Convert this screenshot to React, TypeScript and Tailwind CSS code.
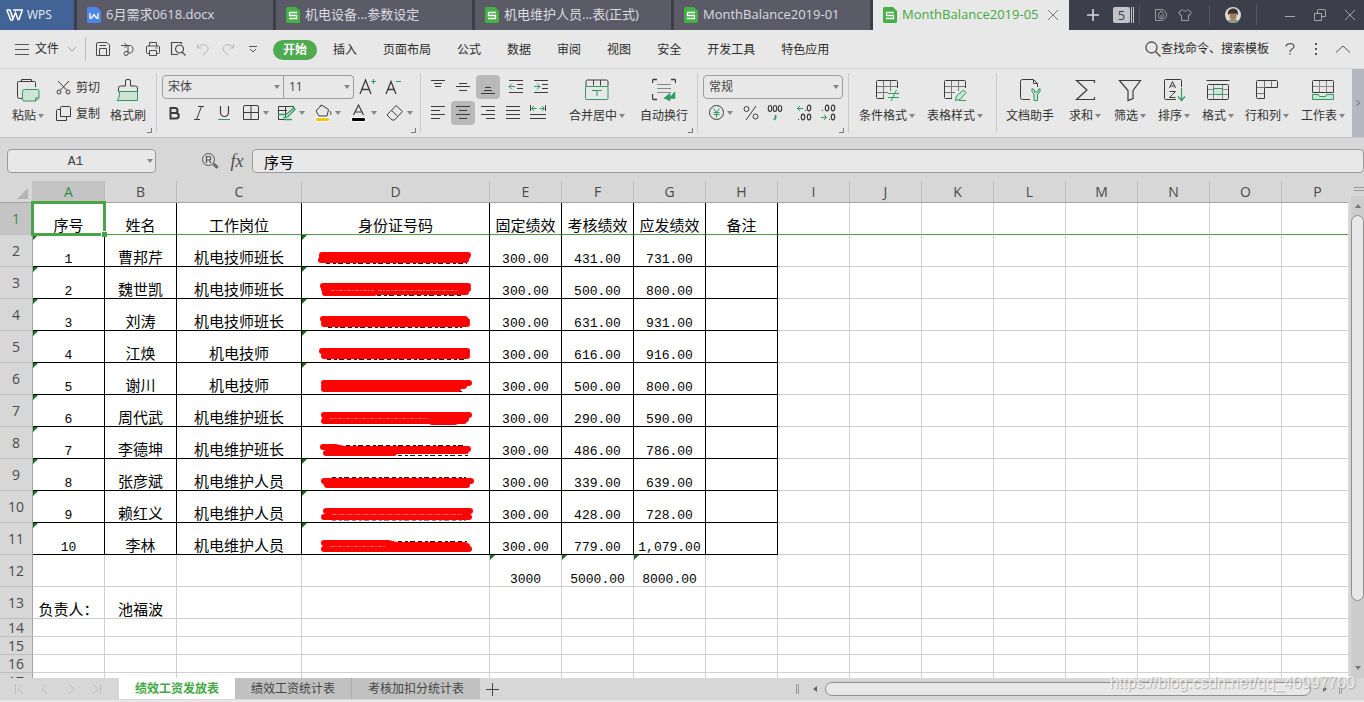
import { useState, type ReactNode } from 'react';

const GREEN = '#2f9a62';
const PALE = '#cfe3d6';

type IconProps = { children: ReactNode; size?: number; color?: string };

function Icon({ children, size = 24, color = '#3c3c3c' }: IconProps) {
  return (
    <svg width={size} height={size} viewBox={`0 0 ${size} ${size}`} fill="none" stroke={color} className="shrink-0" aria-hidden="true">
      {children}
    </svg>
  );
}

function Caret() {
  return (
    <svg width="6" height="4" viewBox="0 0 6 4" fill="#858585" className="shrink-0" aria-hidden="true">
      <path d="M0 0h6L3 4z" />
    </svg>
  );
}

function Corner() {
  return (
    <svg width="5" height="5" viewBox="0 0 5 5" fill="none" stroke="#777" className="absolute right-1 bottom-1" aria-hidden="true">
      <path d="M4.5 0v4.5H0" />
    </svg>
  );
}

function Divider() {
  return <div className="my-1 w-px shrink-0 bg-[#cbcbcb]" />;
}

/* ---------- title bar ---------- */

function FileIcon({ kind }: { kind: 'doc' | 'sheet' }) {
  return (
    <svg width="14" height="16" viewBox="0 0 14 16" className="shrink-0" aria-hidden="true">
      <path d="M1.5 0H10l4 4v10.5a1.5 1.5 0 0 1-1.5 1.5h-11A1.5 1.5 0 0 1 0 14.500v-13A1.500 1.500 0 0 1 1.500 0z" fill={kind === 'doc' ? '#4d85e8' : '#45b045'} />
      {kind === 'doc' ? (
        <path d="M3 6v5h1.500L7 7.500 9.500 11H11V6" fill="none" stroke="#fff" strokeWidth="1.300" />
      ) : (
        <path d="M11 5.500H3.500v3h7v3H3" fill="none" stroke="#fff" strokeWidth="1.300" />
      )}
    </svg>
  );
}

const files: { name: string; kind: 'doc' | 'sheet' }[] = [
  { name: '6月需求0618.docx', kind: 'doc' },
  { name: '机电设备...参数设定', kind: 'sheet' },
  { name: '机电维护人员...表(正式)', kind: 'sheet' },
  { name: 'MonthBalance2019-01', kind: 'sheet' },
];

function TitleBar() {
  return (
    <header className="flex h-[30px] shrink-0 gap-[3px] bg-[#3c3f4b] text-[13px] text-[#dcdce0]">
      <button className="flex w-[74px] shrink-0 items-center gap-1 bg-[#426396] pl-[6px] text-[12px] text-[#e8eef8]">
        <svg width="17" height="12" viewBox="0 0 17 12" fill="none" stroke="#fff" strokeWidth="1.500" aria-hidden="true">
          <path d="M.5 1H4l3 8.500L8.500 6M.8 1l4 10h1.700L9.500 3.500l2.500 7h1L16.300 1H7" />
        </svg>
        WPS
      </button>
      {files.map((f) => (
        <button key={f.name} className="flex w-[196px] shrink items-center gap-[5px] overflow-hidden bg-[#5a5b66] pl-[10px] whitespace-nowrap">
          <FileIcon kind={f.kind} />
          {f.name}
        </button>
      ))}
      <div className="flex w-[196px] shrink items-center gap-[5px] bg-[#e8e8e8] pl-[10px] whitespace-nowrap text-[#43a843]">
        <FileIcon kind="sheet" />
        <span className="grow">MonthBalance2019-05</span>
        <button aria-label="关闭标签" className="mr-[10px]">
          <Icon size={12} color="#777"><path d="M1 1l10 10M11 1L1 11" /></Icon>
        </button>
      </div>
      <div className="flex grow items-center">
        <button aria-label="新建" className="flex w-[41px] shrink-0 justify-center">
          <Icon size={14} color="#d8d8dc"><path d="M7 1v12M1 7h12" strokeWidth="1.600" /></Icon>
        </button>
        <button className="flex h-4 shrink-0 items-center gap-px">
          <span className="h-4 w-[17px] rounded-xs bg-[#c3c4c9] text-center text-[13px] leading-4 text-[#3c3f4b]">5</span>
          <span className="h-4 w-px bg-[#c3c4c9]" />
          <span className="h-4 w-px bg-[#c3c4c9]" />
        </button>
        <span className="ml-[5px] h-5 w-px bg-[#555863]" />
        <button aria-label="稻壳" className="ml-[9px] flex w-6 justify-center">
          <Icon size={14} color="#9b9da6">
            <path d="M1.500 1.500H7a5.500 5.500 0 0 1 0 11H1.500z" />
            <path d="M7 3c1.500 1.500 2.500 3 2.500 4.800A2.400 2.400 0 0 1 7 10.500a2.400 2.400 0 0 1-2.500-2.700C4.500 6 5.500 4.500 7 3zM7 10V7" />
          </Icon>
        </button>
        <button aria-label="皮肤" className="flex w-6 justify-center">
          <Icon size={14} color="#9b9da6"><path d="M4.500 1.500L.8 4l1 3h1.700v5.500h7V7h1.700l1-3-3.700-2.500C8.500 3.500 5.500 3.500 4.500 1.500z" /></Icon>
        </button>
        <span className="ml-3 h-5 w-px bg-[#555863]" />
        <button aria-label="用户" className="ml-[15px] shrink-0">
          <svg width="16" height="16" viewBox="0 0 16 16" aria-hidden="true">
            <circle cx="8" cy="8" r="8" fill="#d9dcd8" />
            <path d="M2.500 14a8 8 0 0 0 11 0C12 11.500 4 11.500 2.500 14z" fill="#8b9a8b" />
            <ellipse cx="8" cy="8.500" rx="3.500" ry="4.500" fill="#a67c60" />
            <path d="M3 8.500C2 3.500 5 1.500 8.200 1.500c3.500 0 5.500 2.500 4.600 7-1-2.300-1.500-2-4.800-2S4 6.500 3 8.500z" fill="#3a332f" />
          </svg>
        </button>
        <span className="ml-[15px] h-5 w-px bg-[#555863]" />
        <div className="ml-auto flex">
          <button aria-label="最小化" className="flex w-[30px] justify-center"><Icon size={12} color="#a3a5ad"><path d="M1 7.500h10" /></Icon></button>
          <button aria-label="还原" className="flex w-[30px] justify-center"><Icon size={12} color="#a3a5ad"><path d="M.5 4.500h7v7h-7zM3.500 4V1.500a1 1 0 0 1 1-1h6a1 1 0 0 1 1 1v6H8" /></Icon></button>
          <button aria-label="关闭" className="flex w-[29px] justify-center"><Icon size={12} color="#a3a5ad"><path d="M1 1l10 10M11 1L1 11" /></Icon></button>
        </div>
      </div>
    </header>
  );
}

/* ---------- menu row ---------- */

const menus = ['开始', '插入', '页面布局', '公式', '数据', '审阅', '视图', '安全', '开发工具', '特色应用'];

const quickTools: { label: string; color?: string; icon: ReactNode }[] = [
  { label: '保存', icon: <path d="M1.500 14.500V3A1.500 1.500 0 0 1 3 1.500h9l2.500 2.500v10.500zM4.500 4.500h6.500M4.500 14V7.500h7V14" /> },
  { label: '输出', icon: <path d="M1 4.500h9.500a4 4 0 0 1 0 7.500H8M4.500 2l2.500 2.500L4.500 7M8 4.500v8a2 2 0 1 1-2-2h2" /> },
  { label: '打印', icon: <path d="M4.500 5V1.500h7V5M4 12.500H2.500a1 1 0 0 1-1-1V6a1 1 0 0 1 1-1h11a1 1 0 0 1 1 1v5.500a1 1 0 0 1-1 1H12M4.500 9.500h7v5h-7zM10.500 7h2" /> },
  { label: '打印预览', icon: <path d="M8 13.500H1.500v-12h10V3M9.500 4a4 4 0 1 0 .1 0zM12 11l3.500 3.500" strokeWidth="1.200" /> },
  { label: '撤销', color: '#b5b5b5', icon: <path d="M2.500 3v4h4M2.800 6.700C5 3.500 9 2.800 11.500 4.800s2.500 5-4 9.200" /> },
  { label: '恢复', color: '#b5b5b5', icon: <path d="M13.500 3v4h-4M13.200 6.700C11 3.500 7 2.800 4.500 4.800s-2.500 5 4 9.200" /> },
];

function MenuRow() {
  const [active, setActive] = useState('开始');
  return (
    <div className="flex h-[39px] shrink-0 items-center border-b border-[#d6d6d6] text-[12px] text-[#2c2c2c]">
      <button className="flex items-center pl-[15px]">
        <Icon size={14} color="#555"><path d="M0 2.500h14M0 7.500h14M0 12.500h14" /></Icon>
        <span className="ml-[6px]">文件</span>
        <span className="ml-2"><Icon size={10} color="#999"><path d="M1 3l4 4 4-4" /></Icon></span>
      </button>
      <span className="ml-2 h-6 w-px bg-[#bdbdbd]" />
      <div className="ml-1 flex">
        {quickTools.map((t) => (
          <button key={t.label} aria-label={t.label} className="flex w-[25px] justify-center">
            <Icon size={16} color={t.color || '#4a4a4a'}>{t.icon}</Icon>
          </button>
        ))}
        <button aria-label="自定义" className="flex w-[25px] items-center justify-center">
          <Icon size={8} color="#555"><path d="M0 1.500h8M1 4l3 3 3-3" /></Icon>
        </button>
      </div>
      <nav className="ml-[5px] flex items-center pt-px">
        {menus.map((m) => (
          <button
            key={m}
            onClick={() => setActive(m)}
            className={
              m === active
                ? 'mx-[3px] h-5 rounded-full bg-[#4eab50] px-[10px] font-bold whitespace-nowrap text-white'
                : 'px-[13px] whitespace-nowrap'
            }
          >
            {m}
          </button>
        ))}
      </nav>
      <button className="ml-auto flex items-center whitespace-nowrap">
        <Icon size={16} color="#555"><circle cx="6.500" cy="6.500" r="5.500" strokeWidth="1.300" /><path d="M10.500 10.500l5 5" strokeWidth="1.500" /></Icon>
        查找命令、搜索模板
      </button>
      <button aria-label="帮助" className="ml-[15px]">
        <Icon size={12} color="#555"><path d="M2 3.500C2 1.500 4 .7 6 .7s4 1 4 3-4 2.300-4 5.300M6 10.200v1.500" strokeWidth="1.300" /></Icon>
      </button>
      <button aria-label="更多" className="ml-[18px]">
        <svg width="4" height="12" viewBox="0 0 4 12" fill="#555" aria-hidden="true"><path d="M1 0h2v2H1zM1 5h2v2H1zM1 10h2v2H1z" /></svg>
      </button>
      <button aria-label="收起" className="mr-[14px] ml-[18px]">
        <Icon size={14} color="#555"><path d="M0 10.500l7-6.500 7 6.500" /></Icon>
      </button>
    </div>
  );
}

/* ---------- ribbon ---------- */

function BigButton({ label, width, caret = true, children }: { label: string; width: string; caret?: boolean; children: ReactNode }) {
  return (
    <button className={`flex shrink-0 flex-col items-center gap-[6px] pt-[9px] ${width}`}>
      <Icon>{children}</Icon>
      <span className="flex items-center gap-[2px] leading-4 whitespace-nowrap">
        {label}
        {caret && <Caret />}
      </span>
    </button>
  );
}

function SmallButton({ label, active = false, caret = false, children }: { label: string; active?: boolean; caret?: boolean; children: ReactNode }) {
  return (
    <button aria-label={label} className={`flex h-6 shrink-0 items-center ${active ? 'rounded-sm bg-[#b9b9b9]' : ''}`}>
      <Icon>{children}</Icon>
      {caret && <Caret />}
    </button>
  );
}

function ComboBox({ label, value, className }: { label: string; value: string; className: string }) {
  return (
    <div className={`relative flex h-6 items-center border-[#9d9d9d] bg-[#e8e8e8] ${className}`}>
      <select aria-label={label} className="h-full w-full appearance-none bg-transparent pl-[5px] text-[12px] text-[#444] outline-none" defaultValue={value}>
        <option>{value}</option>
      </select>
      <span className="pointer-events-none absolute right-[3px] flex"><Caret /></span>
    </div>
  );
}

function Ribbon() {
  return (
    <div className="flex h-[68px] shrink-0 text-[12px] text-[#333]">
      <div className="relative flex w-[156px] shrink-0">
        <BigButton label="粘贴" width="w-[56px]">
          <path d="M6 20.500H3.500a2 2 0 0 1-2-2v-14a1 1 0 0 1 1-1h16a1 1 0 0 1 1 1V9M5.500 3.500v-2h10v2z" />
          <path d="M8.500 11.500h13a1.500 1.500 0 0 1 1.500 1.500v7l-3 3H8a1.500 1.500 0 0 1-1.500-1.500v-8a2 2 0 0 1 2-2zM19.500 23v-3H23" stroke={GREEN} fill={PALE} />
        </BigButton>
        <div className="flex w-[46px] flex-col gap-[2px] pt-[6px]">
          <button className="flex h-6 items-center gap-[5px] pt-px whitespace-nowrap">
            <Icon size={15}><path d="M2 1l9 9.500M13 1L4 10.500" /><circle cx="3" cy="12" r="2" /><circle cx="12" cy="12" r="2" /></Icon>
            剪切
          </button>
          <button className="flex h-6 items-center gap-[5px] pt-px whitespace-nowrap">
            <Icon size={15}><path d="M5.500 .5h8a1 1 0 0 1 1 1v9h-10v-9a1 1 0 0 1 1-1zM4 3.500H1.500a1 1 0 0 0-1 1v10h10V11" /></Icon>
            复制
          </button>
        </div>
        <BigButton label="格式刷" width="w-[52px]" caret={false}>
          <path d="M2.500 13.500h19v9h-19z" fill={PALE} stroke="none" />
          <path d="M2.500 13.500V10a2 2 0 0 1 2-2h5V3a1.500 1.500 0 0 1 1.500-1.500h2A1.500 1.500 0 0 1 14.500 3v5h5a2 2 0 0 1 2 2v3.500" />
          <path d="M2 13.500h20M3.500 14c0 4-.5 6.500-2.500 8.500h20.500V14" stroke={GREEN} />
        </BigButton>
        <Corner />
      </div>
      <Divider />

      <div className="relative flex w-[263px] shrink-0 flex-col gap-[2px] pt-[6px] pl-[5px]">
        <div className="flex items-center">
          <ComboBox label="字体" value="宋体" className="w-[122px] rounded-l-sm border" />
          <ComboBox label="字号" value="11" className="w-[70px] rounded-r-sm border border-l-0" />
          <span className="ml-[2px] flex gap-[2px]">
            <SmallButton label="增大字号">
              <path d="M4 19l5.500-14L15 19M6 14.500h7" strokeWidth="1.300" />
              <path d="M15 6.500h5M17.500 4v5" stroke={GREEN} />
            </SmallButton>
            <SmallButton label="减小字号">
              <path d="M4 19l5-12.500L14 19M6 14.500h6" strokeWidth="1.300" />
              <path d="M14 6.500h5" stroke={GREEN} />
            </SmallButton>
          </span>
        </div>
        <div className="flex items-center gap-px">
          <SmallButton label="加粗"><path d="M8.500 7H13a2.500 2.500 0 0 1 0 5H8.500zM8.500 12H14a2.700 2.700 0 0 1 0 5.500H8.500z" strokeWidth="2" /></SmallButton>
          <SmallButton label="倾斜"><path d="M11 5.500h6M7 18.500h6M14.500 5.500l-5 13" /></SmallButton>
          <SmallButton label="下划线"><path d="M8.500 5v6.500a4 4 0 0 0 8 0V5" strokeWidth="1.200" /><path d="M6 18.500h12" stroke={GREEN} /></SmallButton>
          <span className="ml-[2px] flex gap-[6px]">
            <SmallButton label="边框" caret><path d="M6 4.500h12a1.500 1.500 0 0 1 1.500 1.500v12.500H4.500V6A1.500 1.500 0 0 1 6 4.500zM12 5v14M5 11.500h14" /></SmallButton>
            <SmallButton label="绘图边框" caret>
              <path d="M18.500 8V5.500h-15v13h10M10.500 5.500v11M4 9.500h8" />
              <path d="M3 13.500h8l8-6.500 1 1.500-7 7-5 1.500M9 18.500h8" stroke={GREEN} strokeWidth="1.300" />
            </SmallButton>
            <SmallButton label="填充颜色" caret>
              <path d="M9 5.500l1.500-1.500 7 4.500-1.500 6.500H8L5 10l5.500-6" />
              <path d="M19 10c1 1.500 1.500 3 .5 4" />
              <rect x="4" y="16" width="15" height="5" rx="2" fill="#fff" stroke="none" />
              <rect x="5" y="17" width="13" height="3" rx="1" fill="#f6c21a" stroke="none" />
            </SmallButton>
            <SmallButton label="字体颜色" caret>
              <path d="M6.500 14L11.500 4l5 10M8 11h7" strokeWidth="1.200" />
              <rect x="4" y="16" width="15" height="5" rx="2" fill="#fff" stroke="none" />
              <rect x="5" y="17" width="13" height="3" rx="1" fill="#000" stroke="none" />
            </SmallButton>
            <SmallButton label="清除" caret><path d="M13 4.500l6.500 6-8 8.500H9l-5-5zM8.500 9.500l6 5.500" /></SmallButton>
          </span>
        </div>
        <Corner />
      </div>
      <Divider />

      <div className="relative flex w-[276px] shrink-0 pl-[5px]">
        <div className="flex w-[132px] flex-col gap-[2px] pt-[6px]">
          <div className="flex gap-px">
            <SmallButton label="顶端对齐"><path d="M5 5.500h14M8 8.500h8M9 11.500h6" /></SmallButton>
            <SmallButton label="垂直居中"><path d="M8 8.500h8M5 11.500h14M8 15.500h8" /></SmallButton>
            <SmallButton label="底端对齐" active><path d="M9 12.500h6M8 15.500h8M5 18.500h14" /></SmallButton>
            <span className="w-[2px]" />
            <SmallButton label="减少缩进"><path d="M5 5.500h14M13 9.500h6M13 13.500h6M5 17.500h14" /><path d="M11 11.500H5M8 8.500l-3 3 3 3" stroke={GREEN} /></SmallButton>
            <SmallButton label="增加缩进"><path d="M5 5.500h14M13 9.500h6M13 13.500h6M5 17.500h14" /><path d="M5 11.500h6M8 8.500l3 3-3 3" stroke={GREEN} /></SmallButton>
          </div>
          <div className="flex gap-px">
            <SmallButton label="左对齐"><path d="M5 5.500h14M5 9.500h9M5 13.500h14M5 17.500h9" /></SmallButton>
            <SmallButton label="水平居中" active><path d="M5 5.500h14M8 9.500h8M5 13.500h14M8 17.500h8" /></SmallButton>
            <SmallButton label="右对齐"><path d="M5 5.500h14M10 9.500h9M5 13.500h14M10 17.500h9" /></SmallButton>
            <SmallButton label="两端对齐"><path d="M5 5.500h14M5 9.500h14M5 13.500h14M5 17.500h14" /></SmallButton>
            <SmallButton label="分散对齐"><path d="M4.500 4v6M19.500 4v6M4 13.500h16M4 17.500h16" /><path d="M6 7.500h4.500M8 5L5.500 7.500 8 10M18 7.500h-4.500M16 5l2.500 2.500L16 10" stroke={GREEN} /></SmallButton>
          </div>
        </div>
        <BigButton label="合并居中" width="w-[78px]">
          <path d="M1 8V3.500A1.500 1.500 0 0 1 2.500 2h19A1.500 1.500 0 0 1 23 3.500V8M8.500 2v5.500M15.500 2v5.500" />
          <path d="M.5 8.500h22.500v12a1 1 0 0 1-1 1H1.500a1 1 0 0 1-1-1zM7 12.500h10M12 13v5" stroke={GREEN} />
        </BigButton>
        <BigButton label="自动换行" width="w-[56px]" caret={false}>
          <path d="M.5 5V2.500a1 1 0 0 1 1-1H5M19 1.500h3.500a1 1 0 0 1 1 1V5M.5 16v4.500a1 1 0 0 0 1 1H5" strokeWidth="1.300" />
          <path d="M5 6.500h14M5 10.500h14M5 14.500h14" stroke="#8a8a8a" />
          <path d="M22.500 14v6H17M17.500 16.500V22l-4.500-2z" stroke={GREEN} strokeWidth="1.600" fill={GREEN} />
        </BigButton>
        <Corner />
      </div>
      <Divider />

      <div className="relative flex w-[150px] shrink-0 flex-col gap-[2px] px-[5px] pt-[6px]">
        <ComboBox label="数字格式" value="常规" className="w-full rounded-sm border" />
        <div className="flex">
          <SmallButton label="货币" caret>
            <circle cx="13.500" cy="11.500" r="7" />
            <path d="M10.500 7.500l3 4 3-4M10.500 11.500h6M10.500 13.500h6M13.500 11.500v5" stroke={GREEN} />
          </SmallButton>
          <span className="ml-[6px] flex">
            <SmallButton label="百分比"><path d="M17 5L7 19" /><circle cx="7.500" cy="8" r="2.500" /><circle cx="16.500" cy="15.500" r="2.500" /></SmallButton>
            <SmallButton label="千位分隔">
              <g strokeWidth="1.200"><ellipse cx="7" cy="7.500" rx="1.700" ry="3" /><ellipse cx="12" cy="7.500" rx="1.700" ry="3" /><ellipse cx="17" cy="7.500" rx="1.700" ry="3" /></g>
              <path d="M12.500 14v3l-1.500 2" stroke={GREEN} strokeWidth="1.800" />
            </SmallButton>
          </span>
          <span className="ml-[5px] flex">
            <SmallButton label="增加小数">
              <path d="M11 7.500H5M8 5L5.500 7.500 8 10" stroke={GREEN} />
              <g strokeWidth="1.200"><ellipse cx="17" cy="7" rx="1.700" ry="2.800" /><ellipse cx="11" cy="16" rx="1.700" ry="2.800" /><ellipse cx="17" cy="16" rx="1.700" ry="2.800" /><path d="M13 9.500h1M6 18.500h1" /></g>
            </SmallButton>
            <SmallButton label="减少小数">
              <path d="M5 16.500h6M8 14l2.500 2.500L8 19" stroke={GREEN} />
              <g strokeWidth="1.200"><ellipse cx="11" cy="7" rx="1.700" ry="2.800" /><ellipse cx="17" cy="7" rx="1.700" ry="2.800" /><ellipse cx="17" cy="16" rx="1.700" ry="2.800" /><path d="M6 9.500h1M13 18.500h1" /></g>
            </SmallButton>
          </span>
        </div>
        <Corner />
      </div>
      <Divider />

      <div className="flex w-[147px] shrink-0 pl-[4px]">
        <BigButton label="条件格式" width="w-[68px]">
          <path d="M9 20.500H2.500a1 1 0 0 1-1-1V3.500a1 1 0 0 1 1-1h19a1 1 0 0 1 1 1V10" />
          <path d="M2 8.500h20M8.500 3v17M15.500 3v10M2 14.500h11" stroke="#777" />
          <path d="M13 15.500h11M13 19.500h11M21.500 12l-5.500 11" stroke={GREEN} />
        </BigButton>
        <BigButton label="表格样式" width="w-[68px]">
          <path d="M9 20.500H2.500a1 1 0 0 1-1-1V3.500a1 1 0 0 1 1-1h19a1 1 0 0 1 1 1V10" />
          <path d="M2 8.500h20M8.500 3v17M15.500 3v10M2 14.500h10" stroke="#777" />
          <path d="M12.500 22.500l1-4.500 7-6 2.500 2.500-6 7zM16 22.500h7" stroke={GREEN} fill={PALE} />
        </BigButton>
      </div>
      <Divider />

      <div className="flex min-w-0 grow pl-px">
        <BigButton label="文档助手" width="w-16" caret={false}>
          <path d="M12 21.500H4.500a2 2 0 0 1-2-2v-16a2 2 0 0 1 2-2h11l4 4V9M15.500 2v3.500h4" />
          <path d="M14 10.500v3.500l2 2v6.500h3.500V16l2.500-2v-3.500l-2 1.500v2h-3.500v-2z" stroke={GREEN} fill={PALE} />
        </BigButton>
        <BigButton label="求和" width="w-[46px]">
          <path d="M21.500 5V2.500H3.500L14 12 3.500 21.500h18V19" strokeWidth="1.200" />
        </BigButton>
        <BigButton label="筛选" width="w-[44px]">
          <path d="M1.500 2.500h21L15 12.500v8L10 22.500v-10z" strokeWidth="1.200" />
        </BigButton>
        <BigButton label="排序" width="w-[44px]">
          <path d="M14 21.500H3.500a1 1 0 0 1-1-1v-18a1 1 0 0 1 1-1h15a1 1 0 0 1 1 1V9" />
          <path d="M7.500 10L10.500 3.500l3 6.500M8.500 8h4M7.500 13.500h6l-6 6h6" />
          <path d="M19.500 10v12M16 18.500l3.500 4 3.500-4" stroke={GREEN} strokeWidth="1.200" />
        </BigButton>
        <BigButton label="格式" width="w-[44px]">
          <path d="M.5 2.500h23M2.500 6.500h19a1 1 0 0 1 1 1v13a1 1 0 0 1-1 1h-19a1 1 0 0 1-1-1v-13a1 1 0 0 1 1-1z" />
          <path d="M2 11.500h20M2 16.500h20M7.500 7v14M16.500 7v14" stroke="#888" />
          <path d="M7.500 10.500h9v6h-9z" stroke={GREEN} fill={PALE} />
        </BigButton>
        <BigButton label="行和列" width="w-[54px]">
          <path d="M2.500 2.500h19a1 1 0 0 1 1 1v6H9.500v11h-7a1 1 0 0 1-1-1v-16a1 1 0 0 1 1-1z" />
          <path d="M2 9.500h7.500M2 15.500h7M9.500 3v7M16.500 3v6" stroke="#777" />
        </BigButton>
        <BigButton label="工作表" width="w-[58px]">
          <path d="M1.500 14.500v-11a1 1 0 0 1 1-1h19a1 1 0 0 1 1 1v11z" />
          <path d="M2 8.500h20M8.500 3v11M15.500 3v11" stroke="#888" />
          <path d="M1.500 16.500h6l1 2h6l1-2h7v5h-21z" stroke={GREEN} fill={PALE} />
        </BigButton>
      </div>
      <button aria-label="更多工具" className="flex w-3 shrink-0 items-center justify-center bg-[#b5b8c1]">
        <Icon size={6} color="#666"><path d="M1.500 0L4.500 3 1.500 6" /></Icon>
      </button>
    </div>
  );
}

/* ---------- formula bar ---------- */

function FormulaBar() {
  return (
    <div className="flex h-[44px] shrink-0 items-start border-t border-[#c4c4c4] bg-[#d7d7d7] pt-[11px] pl-[7px]">
      <div className="relative flex h-6 w-[149px] items-center">
        <input aria-label="名称框" defaultValue="A1" className="h-6 w-full rounded-sm border border-[#9a9a9a] bg-[#e8e8e8] pr-3 text-center font-['Liberation_Mono','Noto_Sans_CJK_SC',monospace] text-[13px] text-[#444] outline-none" />
        <span className="pointer-events-none absolute right-[3px] flex"><Caret /></span>
      </div>
      <button aria-label="浏览" className="ml-[45px] flex h-6 items-center">
        <Icon size={18} color="#555"><circle cx="7.500" cy="7.500" r="6" /><path d="M5.500 11V4.500H8a1.700 1.700 0 0 1 0 3.500H5.500M8 8l2 3M12 12.500l3.500 3.500 1.200-1.200-3.700-3.500" strokeWidth="1.200" /></Icon>
      </button>
      <button aria-label="插入函数" className="ml-[9px] h-6 w-[18px] font-['Liberation_Serif',serif] text-[18px] leading-5 text-[#4f4f4f] italic">fx</button>
      <input aria-label="编辑栏" defaultValue="序号" className="ml-[6px] h-6 min-w-0 grow rounded-sm border border-[#9a9a9a] bg-[#e8e8e8] pl-[11px] font-['Noto_Sans_CJK_SC',sans-serif] text-[15px] leading-5 text-black outline-none" />
    </div>
  );
}

/* ---------- sheet ---------- */

const columns = [
  { id: 'A', width: 'w-[72px]' },
  { id: 'B', width: 'w-[72px]' },
  { id: 'C', width: 'w-[125px]' },
  { id: 'D', width: 'w-[188px]' },
  { id: 'E', width: 'w-[72px]' },
  { id: 'F', width: 'w-[72px]' },
  { id: 'G', width: 'w-[72px]' },
  { id: 'H', width: 'w-[72px]' },
  { id: 'I', width: 'w-[72px]' },
  { id: 'J', width: 'w-[72px]' },
  { id: 'K', width: 'w-[72px]' },
  { id: 'L', width: 'w-[72px]' },
  { id: 'M', width: 'w-[72px]' },
  { id: 'N', width: 'w-[72px]' },
  { id: 'O', width: 'w-[72px]' },
  { id: 'P', width: 'w-[72px]' },
];

const rows: string[][] = [
  ['序号', '姓名', '工作岗位', '身份证号码', '固定绩效', '考核绩效', '应发绩效', '备注'],
  ['1', '曹邦芹', '机电技师班长', '', '300.00', '431.00', '731.00'],
  ['2', '魏世凯', '机电技师班长', '', '300.00', '500.00', '800.00'],
  ['3', '刘涛', '机电技师班长', '', '300.00', '631.00', '931.00'],
  ['4', '江焕', '机电技师', '', '300.00', '616.00', '916.00'],
  ['5', '谢川', '机电技师', '', '300.00', '500.00', '800.00'],
  ['6', '周代武', '机电维护班长', '', '300.00', '290.00', '590.00'],
  ['7', '李德坤', '机电维护班长', '', '300.00', '486.00', '786.00'],
  ['8', '张彦斌', '机电维护人员', '', '300.00', '339.00', '639.00'],
  ['9', '赖红义', '机电维护人员', '', '300.00', '428.00', '728.00'],
  ['10', '李林', '机电维护人员', '', '300.00', '779.00', '1,079.00'],
  ['', '', '', '', '3000', '5000.00', '8000.00'],
  ['负责人：', '池福波'],
  [],
  [],
  [],
  [],
];

// marker strokes over the id numbers: red brush, black remains, light gaps
const marks: { red: string; black?: string; light?: string }[] = [
  { red: 'M20 20H166M19 25H164M20 22H165', black: 'M24 28.500H165' },
  { red: 'M21 19H166M22 22H166M23 25H164M23 26H72', light: 'M29 23.500H72M76 23.500H155', black: 'M75 28.500H162' },
  { red: 'M21 20H163M22 22H165M22 25H165', black: 'M26 28.500H160' },
  { red: 'M20 20H165M22 22H165M22 25H165', black: 'M25 28.500H164' },
  { red: 'M22 20H167M22 23H162M22 26H156', black: 'M136 28.500H163' },
  { red: 'M22 20H167M23 24H164M22 26H162M130 27H153', light: 'M28 23.500H126' },
  { red: 'M21 20H33L42 22H166M30 24H164M24 26H92', black: 'M44 18.500H164M96 28.500H166' },
  { red: 'M22 22H169M24 24H164M25 26H165', black: 'M30 18.500H164' },
  { red: 'M24 20H168M26 23H164M22 26H167', light: 'M30 23.500H160', black: 'M30 29H164' },
  { red: 'M22 20H86L94 22H163M24 23H165M22 26H167', black: 'M96 18.500H165', light: 'M28 23.500H84' },
];

function Marker({ index }: { index: number }) {
  const m = marks[index];
  return (
    <svg width="187" height="31" viewBox="0 0 187 31" fill="none" className="block" role="img" aria-label="已遮盖">
      {m.black && <path d={m.black} stroke="#3a1010" strokeDasharray="4 3 3 2 5 3" />}
      <path d={m.red} stroke="#fb0404" strokeWidth="6" strokeLinecap="round" strokeLinejoin="round" />
      {m.light && <path d={m.light} stroke="#f66" strokeDasharray="4 1 2 1" />}
    </svg>
  );
}

function hasErrorFlag(row: number, col: number) {
  if (row >= 1 && row <= 10 && col === 0) return true;
  if (row >= 1 && row <= 10 && col === 3) return row !== 6 && row !== 7;
  return row === 11 && col >= 4 && col <= 6;
}

function cellBorder(row: number, col: number) {
  const boxed = col <= 7 && row <= 10;
  const right = boxed ? 'border-r-black' : 'border-r-[#d0d0d0]';
  if (row === 0) return `${right} border-b-[#4f9a48]`;
  return `${right} ${boxed ? 'border-b-black' : 'border-b-[#d0d0d0]'}`;
}

function Sheet() {
  return (
    <div className="min-w-0 grow overflow-hidden bg-white">
      <table className="w-px table-fixed border-separate border-spacing-0">
        <colgroup>
          <col className="w-[33px]" />
          {columns.map((c) => <col key={c.id} className={c.width} />)}
        </colgroup>
        <thead>
          <tr className="h-[22px] bg-[#d7d7d7] text-[14px] text-[#4a4a4a]">
            <td className="h-[22px] border-r border-b border-r-[#c4c4c4] border-b-[#a3a3a3] p-0">
              <svg width="11" height="11" viewBox="0 0 11 11" className="mt-1 mr-1 ml-auto" aria-hidden="true"><path d="M11 0v11H0z" fill="#b5b5b5" /></svg>
            </td>
            {columns.map((c) => (
              <th
                key={c.id}
                scope="col"
                className={`h-[22px] border-r border-b border-r-[#bcbcbc] border-b-[#a3a3a3] p-0 leading-5 font-normal ${c.id === 'A' ? 'bg-[#c4c4c4] text-[#3b8a4c]' : ''}`}
              >
                {c.id}
              </th>
            ))}
          </tr>
        </thead>
        <tbody>
          {rows.map((cells, r) => (
            <tr key={r} className={r < 13 ? 'h-8' : 'h-[18px]'}>
              <th
                scope="row"
                className={`border-r border-b border-r-[#a3a3a3] border-b-[#bcbcbc] p-0 align-middle text-[14px] leading-4 font-normal ${r === 0 ? 'bg-[#c4c4c4] text-[#3b8a4c]' : 'bg-[#d7d7d7] text-[#4a4a4a]'}`}
              >
                {r + 1}
              </th>
              {columns.map((c, i) => {
                const text = cells[i] || '';
                const numeric = /^[\d.,]+$/.test(text);
                return (
                  <td
                    key={c.id}
                    className={`relative border-r border-b p-0 text-center align-bottom font-['Liberation_Mono','Noto_Sans_CJK_SC',monospace] leading-3 whitespace-nowrap text-black ${numeric ? 'text-[13px]' : 'text-[15px]'} ${cellBorder(r, i)}`}
                  >
                    {hasErrorFlag(r, i) && (
                      <svg width="5" height="5" viewBox="0 0 5 5" className="absolute top-0 left-0" aria-hidden="true"><path d="M0 0h5L0 5z" fill="#1c6b25" /></svg>
                    )}
                    {i === 3 && r >= 1 && r <= 10 ? <Marker index={r - 1} /> : text}
                    {r === 0 && i === 0 && (
                      <span className="absolute -top-[2px] -right-[2px] -bottom-[2px] -left-[2px] z-10 border-3 border-[#49a349]">
                        <span className="absolute -right-1 -bottom-1 h-[6px] w-[6px] border-t border-l border-white bg-[#49a349]" />
                      </span>
                    )}
                  </td>
                );
              })}
            </tr>
          ))}
        </tbody>
      </table>
    </div>
  );
}

function VerticalScroll() {
  return (
    <div className="flex w-4 shrink-0 flex-col items-end bg-[#d7d7d7]">
      <div className="flex h-[15px] w-full flex-col items-end justify-center gap-[2px]">
        <span className="h-px w-[10px] bg-[#999]" />
        <span className="h-px w-[10px] bg-[#999]" />
      </div>
      <div className="flex min-h-0 w-[13px] grow flex-col items-center bg-[#cdcdcd]">
        <button aria-label="向上滚动" className="flex h-[19px] items-center">
          <svg width="6" height="4" viewBox="0 0 6 4" fill="#777"><path d="M3 0l3 4H0z" /></svg>
        </button>
        <div className="w-full grow-[386] rounded-full border border-[#8f8f8f] bg-[#e8e8e8]" />
        <div className="grow-[57]" />
        <button aria-label="向下滚动" className="flex h-5 items-center">
          <svg width="6" height="4" viewBox="0 0 6 4" fill="#777"><path d="M0 0h6L3 4z" /></svg>
        </button>
      </div>
    </div>
  );
}

/* ---------- sheet tabs ---------- */

const navArrows = [
  { label: '第一张', d: 'M2.500 1v10M10 1L5 6l5 5' },
  { label: '上一张', d: 'M8 1L3 6l5 5' },
  { label: '下一张', d: 'M4 1l5 5-5 5' },
  { label: '最后一张', d: 'M9.500 1v10M2 1l5 5-5 5' },
];

function SheetTabs() {
  return (
    <footer className="flex h-[22px] shrink-0 items-stretch bg-[#d7d7d7] text-[12px] text-[#444]">
      <div className="flex w-[119px] shrink-0 items-center pl-[6px]">
        {navArrows.map((a) => (
          <button key={a.label} aria-label={a.label} className="flex w-[26px] justify-center">
            <Icon size={12} color="#bebebe"><path d={a.d} /></Icon>
          </button>
        ))}
      </div>
      <button className="mb-px shrink-0 bg-white px-4 pt-px font-bold text-[#43a843]">绩效工资发放表</button>
      <button className="mb-px shrink-0 border-r border-[#adadad] bg-[#c1c1c1] px-4 pt-px">绩效工资统计表</button>
      <button className="mb-px shrink-0 bg-[#c1c1c1] px-4 pt-px">考核加扣分统计表</button>
      <button aria-label="新建工作表" className="flex w-6 shrink-0 items-center justify-center">
        <Icon size={13} color="#444"><path d="M6.500 0v13M0 6.500h13" /></Icon>
      </button>
      <div className="relative ml-auto flex w-[569px] min-w-0 items-center">
        <Icon size={10} color="#999"><path d="M1.500 0v10M3.500 0v10" /></Icon>
        <button aria-label="向左滚动" className="flex w-5 justify-center">
          <svg width="4" height="6" viewBox="0 0 4 6" fill="#666"><path d="M4 0v6L0 3z" /></svg>
        </button>
        <div className="h-[14px] grow rounded-full border border-[#8f8f8f] bg-[#e8e8e8]" />
        <button aria-label="向右滚动" className="flex w-[27px] justify-center">
          <svg width="4" height="6" viewBox="0 0 4 6" fill="#666"><path d="M0 0v6l4-3z" /></svg>
        </button>
        <span className="mr-[16px]"><Icon size={10} color="#999"><path d="M1.500 0v10M3.500 0v10" /></Icon></span>
        <span className="absolute right-[9px] -bottom-px z-10 flex h-9 items-center font-['Liberation_Sans',sans-serif] text-[16px] text-white/70 [text-shadow:1px_1px_1px_#aaaaaa]">
          https://blog.csdn.net/qq_40997700
        </span>
      </div>
    </footer>
  );
}

export default function App() {
  return (
    <div className="flex h-screen flex-col overflow-hidden bg-[#e8e8e8] pb-[2px] font-['Open_Sans','Noto_Sans_CJK_SC',sans-serif]">
      <TitleBar />
      <MenuRow />
      <Ribbon />
      <FormulaBar />
      <main className="flex min-h-0 grow">
        <Sheet />
        <VerticalScroll />
      </main>
      <SheetTabs />
    </div>
  );
}
